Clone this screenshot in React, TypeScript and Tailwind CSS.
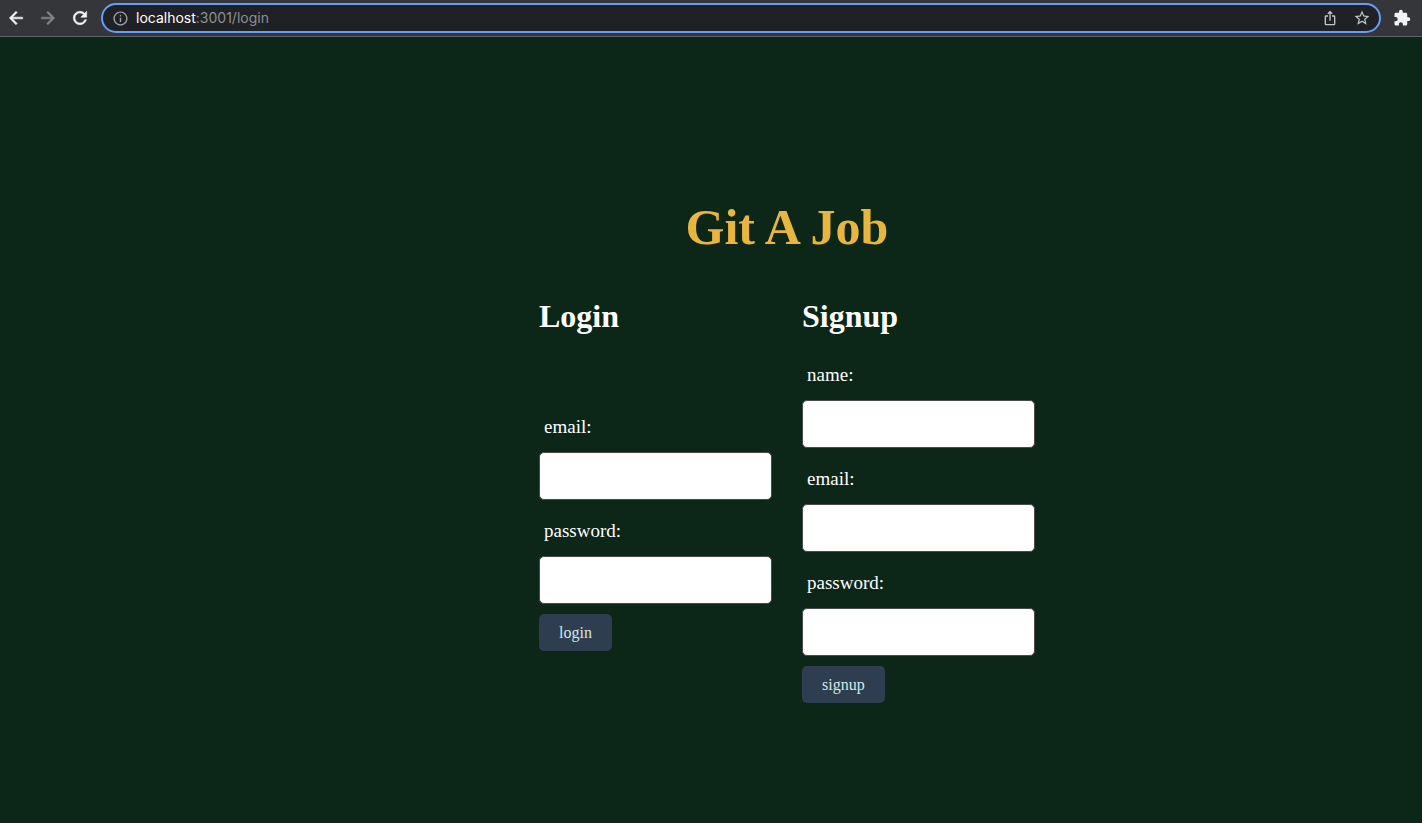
import type { ReactNode } from "react";
import { MdExtension, MdInfoOutline, MdIosShare, MdStarBorder } from "react-icons/md";

const BACK = "M20 11H7.83l5.59-5.59L12 4l-8 8 8 8 1.41-1.41L7.83 13H20v-2z";
const FORWARD = "M12 4l-1.41 1.41L16.17 11H4v2h12.17l-5.58 5.59L12 20l8-8z";
const RELOAD =
  "M17.65 6.35A7.958 7.958 0 0 0 12 4c-4.42 0-7.99 3.58-7.99 8s3.57 8 7.99 8c3.73 0 6.84-2.55 7.73-6h-2.08A5.99 5.99 0 0 1 12 18c-3.31 0-6-2.69-6-6s2.69-6 6-6c1.66 0 3.14.69 4.22 1.78L13 11h7V4l-2.35 2.35z";

function NavIcon({ path }: { path: string }) {
  return (
    <svg viewBox="0 0 24 24" className="h-5 w-5 fill-current stroke-current stroke-[0.7]" aria-hidden="true">
      <path d={path} />
    </svg>
  );
}

function BarButton({ label, className, children }: { label: string; className: string; children: ReactNode }) {
  return (
    <button type="button" aria-label={label} className={`flex h-8 w-8 shrink-0 items-center justify-center ${className}`}>
      {children}
    </button>
  );
}

function BrowserBar() {
  return (
    <header className="flex h-[37px] items-center border-b border-[#5f6164] bg-[#35363a]">
      <BarButton label="Back" className="text-[#f1f3f4]">
        <NavIcon path={BACK} />
      </BarButton>
      <BarButton label="Forward" className="text-[#85868a]">
        <NavIcon path={FORWARD} />
      </BarButton>
      <BarButton label="Reload" className="text-[#f1f3f4]">
        <NavIcon path={RELOAD} />
      </BarButton>
      <div className="ml-[5px] flex h-[30px] min-w-0 flex-1 items-center rounded-full border-2 border-[#669df6] bg-[#202124] pr-px pl-[9px] font-['Inter','Liberation_Sans',sans-serif] text-[14px] leading-5">
        <MdInfoOutline size={17} className="shrink-0 text-[#9aa0a6]" />
        <a href="/login" className="ml-[7px] flex-1 truncate text-[#8c8f94]">
          <span className="text-white">localhost</span>:3001/login
        </a>
        <BarButton label="Share" className="text-[#c4c7c9]">
          <MdIosShare size={16} />
        </BarButton>
        <BarButton label="Bookmark" className="text-[#c4c7c9]">
          <MdStarBorder size={18} />
        </BarButton>
      </div>
      <BarButton label="Extensions" className="mr-1 ml-[5px] text-[#f1f3f4]">
        <MdExtension size={18} />
      </BarButton>
    </header>
  );
}

function Field({ id, label, type }: { id: string; label: string; type: string }) {
  return (
    <div className="flex flex-col gap-[14px]">
      <label htmlFor={id} className="pl-[5px] text-[19px] leading-[22px]">
        {label}
      </label>
      <input
        id={id}
        type={type}
        className="h-12 w-full rounded-[5px] border border-[#4a4a4a] bg-white px-3 text-[19px] text-black"
      />
    </div>
  );
}

function AuthForm({
  title,
  action,
  fieldsClass,
  children,
}: {
  title: string;
  action: string;
  fieldsClass: string;
  children: ReactNode;
}) {
  return (
    <form className="w-[233px]" onSubmit={(event) => event.preventDefault()}>
      <h2 className="text-[32px] leading-9 font-bold">{title}</h2>
      <div className={`flex flex-col gap-5 ${fieldsClass}`}>{children}</div>
      <button
        type="submit"
        className="mt-[10px] h-[37px] rounded-[5px] bg-[#2e3d4f] px-5 text-[16px] leading-5 text-[#d5e8e4]"
      >
        {action}
      </button>
    </form>
  );
}

export default function App() {
  return (
    <div className="flex min-h-screen flex-col bg-[#0c2618]">
      <BrowserBar />
      <main className="flex flex-1 flex-col items-center pt-[162px] pb-10 pl-[152px] font-['Liberation_Serif',serif] text-white">
        <h1 className="text-[50px] leading-[56px] font-bold text-[#e8b63e]">Git A Job</h1>
        <div className="mt-[43px] flex flex-wrap justify-center gap-[30px]">
          <AuthForm title="Login" action="login" fieldsClass="mt-[82px]">
            <Field id="login-email" label="email:" type="email" />
            <Field id="login-password" label="password:" type="password" />
          </AuthForm>
          <AuthForm title="Signup" action="signup" fieldsClass="mt-[30px]">
            <Field id="signup-name" label="name:" type="text" />
            <Field id="signup-email" label="email:" type="email" />
            <Field id="signup-password" label="password:" type="password" />
          </AuthForm>
        </div>
      </main>
    </div>
  );
}
